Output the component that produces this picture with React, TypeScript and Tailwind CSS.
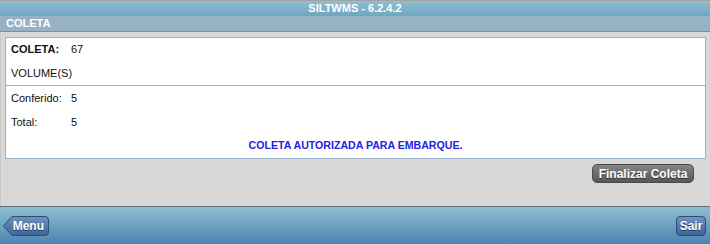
import React from 'react'

const font = { fontFamily: '"Liberation Sans", Arial, sans-serif' }

function MenuButton(){
  return (
    <div className="relative w-[46px] h-[20px] flex items-center justify-end pr-[5px]">
      <svg className="absolute inset-0" width="46" height="20" viewBox="0 0 46 20">
        <defs>
          <linearGradient id="mb" x1="0" y1="0" x2="0" y2="1">
            <stop offset="0" stopColor="#6f93bd" />
            <stop offset="1" stopColor="#3f6597" />
          </linearGradient>
        </defs>
        <path d="M0.5 10 L9 0.5 H42 Q45.5 0.5 45.5 4 V16 Q45.5 19.5 42 19.5 H9 Z" fill="url(#mb)" stroke="#2d4d78" />
      </svg>
      <span className="relative text-white font-bold text-[12px] leading-none [text-shadow:0_1px_0_#223a5c]">Menu</span>
    </div>
  )
}

export default function App(){
  return (
    <div className="w-[710px] h-[244px] flex flex-col bg-[#d8d8d8]" style={font}>
      {/* title */}
      <div className="h-[16px] border-t border-[#a3a3a3] bg-gradient-to-b from-[#8fbfd1] to-[#6fa6bf] flex items-center justify-center">
        <span className="text-white font-bold text-[11px] leading-none">SILTWMS - 6.2.4.2</span>
      </div>
      <div className="h-[16px] bg-[#96b2c4] border-b border-[#7791a6] flex items-center px-[6px]">
        <span className="text-white font-bold text-[11px] leading-none">COLETA</span>
      </div>

      {/* body */}
      <div className="flex-1 border-l border-[#c9c9c9] px-[4px] pt-[5px]">
        <div className="bg-white border border-[#9bb3c6] text-[11px] text-[#111]">
          <div className="h-[22px] flex items-center px-[5px] pt-[1px]">
            <span className="w-[60px] font-bold">COLETA:</span>
            <span>67</span>
          </div>
          <div className="h-[26px] flex items-center px-[5px] pt-[2px] border-b border-[#9bb3c6]">
            <span>VOLUME(S)</span>
          </div>
          <div className="h-[24px] flex items-center px-[5px]">
            <span className="w-[60px]">Conferido:</span>
            <span>5</span>
          </div>
          <div className="h-[24px] flex items-center px-[5px]">
            <span className="w-[60px]">Total:</span>
            <span>5</span>
          </div>
          <div className="h-[24px] flex items-center justify-center">
            <span className="font-bold text-[#2222e6] text-[10.6px]">COLETA AUTORIZADA PARA EMBARQUE.</span>
          </div>
        </div>
        <div className="flex justify-end pr-[12px] pt-[5px]">
          <button className="h-[19px] w-[102px] rounded-[5px] border border-[#4a4a4a] bg-gradient-to-b from-[#858585] to-[#585858] text-white font-bold text-[12px] leading-none [text-shadow:0_1px_0_#333]">
            Finalizar Coleta
          </button>
        </div>
      </div>

      {/* footer */}
      <div className="h-[38px] border-t border-[#5d6e7c] bg-gradient-to-b from-[#8fc0d0] to-[#4d84b1] flex items-center justify-between pl-[3px] pr-[4px]">
        <MenuButton />
        <button className="h-[20px] w-[30px] rounded-[4px] border border-[#2d4d78] bg-gradient-to-b from-[#6f93bd] to-[#3f6597] text-white font-bold text-[12px] leading-none [text-shadow:0_1px_0_#223a5c]">
          Sair
        </button>
      </div>
    </div>
  )
}
